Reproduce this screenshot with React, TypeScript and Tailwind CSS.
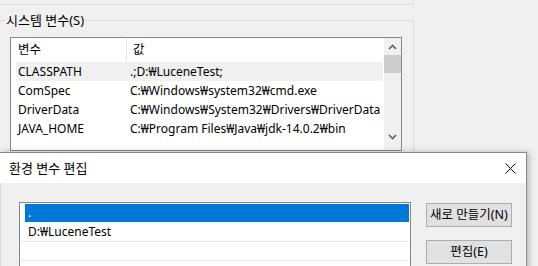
import React from "react";

const font = { fontFamily: '"Noto Sans", "Noto Sans CJK KR", sans-serif' };

const rows = [
  { name: "CLASSPATH", value: ".;D:₩LuceneTest;", sel: true },
  { name: "ComSpec", value: "C:₩Windows₩system32₩cmd.exe" },
  { name: "DriverData", value: "C:₩Windows₩System32₩Drivers₩DriverData" },
  { name: "JAVA_HOME", value: "C:₩Program Files₩Java₩jdk-14.0.2₩bin" },
];

function Chevron({ up }: { up?: boolean }) {
  return (
    <svg width="9" height="6" viewBox="0 0 9 6">
      <path
        d={up ? "M1 5 L4.5 1.5 L8 5" : "M1 1 L4.5 4.5 L8 1"}
        fill="none"
        stroke="#606060"
        strokeWidth="1.6"
      />
    </svg>
  );
}

export default function App() {
  return (
    <div
      className="relative w-[538px] h-[266px] overflow-hidden bg-[#f0f0f0] text-[12px] text-black"
      style={font}
    >
      {/* remnant of previous group box */}
      <div className="w-[414px] h-[5px] border-b border-r border-[#dcdcdc]" />

      {/* system variables group */}
      <div className="relative mt-[15px] w-[414px] h-[300px] border-t border-r border-[#dcdcdc]">
        <div className="absolute left-[5px] top-[-10px] px-[1px] bg-[#f0f0f0] leading-[18px] text-[13px]">
          시스템 변수(S)
        </div>

        <div className="ml-[10px] mt-[16px] w-[392px] h-[114px] border border-[#828790] bg-white flex">
          <div className="flex-1 flex flex-col">
            <div className="h-[24px] flex items-center">
              <div className="w-[116px] h-[23px] pl-[7px] border-r border-[#e5e5e5] flex items-center text-[12.5px]">
                변수
              </div>
              <div className="pl-[6px] text-[12.5px]">값</div>
            </div>
            {rows.map((r) => (
              <div
                key={r.name}
                className={`h-[19px] ml-[5px] mr-[1px] flex items-center leading-[19px] whitespace-nowrap ${
                  r.sel ? "bg-[#f0f0f0]" : ""
                }`}
              >
                <div className="w-[114px] pl-[2px]">{r.name}</div>
                <div className="flex-1 overflow-hidden">{r.value}</div>
              </div>
            ))}
          </div>
          <div className="w-[17px] flex flex-col bg-[#f0f0f0]">
            <div className="h-[17px] flex items-center justify-center">
              <Chevron up />
            </div>
            <div className="h-[18px] bg-[#cdcdcd]" />
            <div className="flex-1" />
            <div className="h-[17px] flex items-center justify-center">
              <Chevron />
            </div>
            <div className="h-[5px]" />
          </div>
        </div>
      </div>

      {/* edit dialog */}
      <div className="absolute left-0 top-[152px] w-[527px] h-[130px] border-t border-r border-[#8a8a8a] bg-[#f0f0f0] shadow-[2px_0_6px_rgba(0,0,0,0.25)] flex flex-col">
        <div className="h-[30px] bg-white flex items-center justify-between pl-[9px] pr-[10px] shrink-0">
          <span className="leading-[16px] text-[13px]">환경 변수 편집</span>
          <svg width="11" height="11" viewBox="0 0 11 11">
            <path d="M0.5 0.5 L10.5 10.5 M10.5 0.5 L0.5 10.5" stroke="#000" strokeWidth="1" />
          </svg>
        </div>
        <div className="flex-1 flex border-l border-[#dadada]">
          <div className="ml-[18px] mt-[19px] w-[392px] h-[80px] border border-[#828790] bg-white pt-[1px]">
            <div className="h-[19px] ml-[5px] mr-[1px] bg-[#0078d7] text-white pl-[3px] leading-[17px] border-b border-white">
              .
            </div>
            <div className="h-[19px] pl-[8px] leading-[18px] border-b border-[#e8e8e8]">
              D:₩LuceneTest
            </div>
            <div className="h-[19px] border-b border-[#e8e8e8]" />
            <div className="h-[19px] border-b border-[#e8e8e8]" />
          </div>
          <div className="ml-[15px] mt-[20px] flex flex-col gap-[13px]">
            <button className="w-[86px] h-[24px] bg-[#e1e1e1] border border-[#adadad] leading-[20px] text-[12.5px]">
              새로 만들기(N)
            </button>
            <button className="w-[86px] h-[24px] bg-[#e1e1e1] border border-[#adadad] leading-[20px] text-[12.5px]">
              편집(E)
            </button>
          </div>
        </div>
      </div>
    </div>
  );
}
